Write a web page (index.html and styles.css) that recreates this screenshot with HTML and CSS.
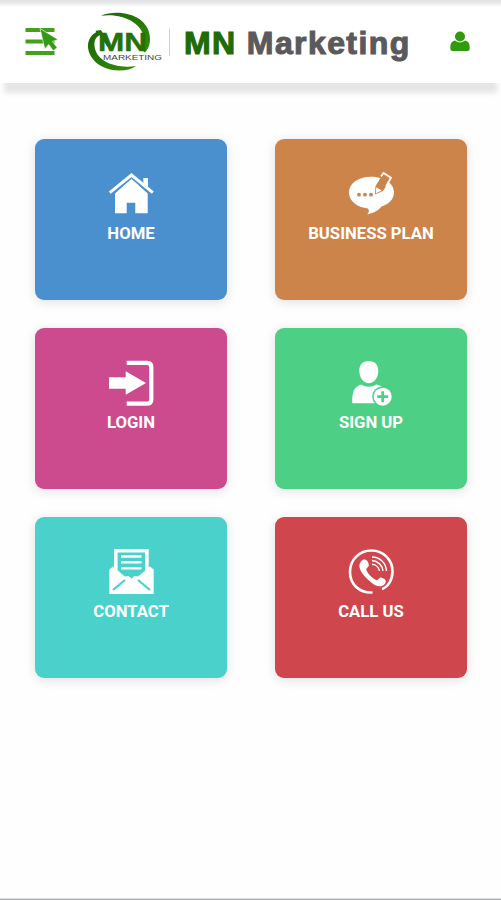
FILE: index.html
```
<!DOCTYPE html>
<html lang="en">
  <head>
    <meta charset="UTF-8" />
    <meta name="viewport" content="width=device-width, initial-scale=1.0" />
    <title>MN Marketing</title>
    <link rel="stylesheet" href="styles.css" />
  </head>
  <body>
    <div class="wrapper">
      <header>
        <a href="#" class="menu" aria-label="Menu">
          <svg width="34" height="30" viewBox="0 0 34 30">
            <path d="M1.500 3h29M1.500 14.500h29M1.500 26h29" stroke="#45a11c" stroke-width="4.200" />
            <path d="M16 1.500L34 12.500l-5.500 2 4.700 6.200-4 3-4.500-6.200-3.900 4.500z" fill="#349a16" stroke="#fff" stroke-width=".6" />
          </svg>
        </a>
        <a href="#" class="logo" aria-label="MN Marketing">
          <svg width="76" height="60" viewBox="0 0 76 60">
            <defs>
              <linearGradient id="swoosh" x1="0" y1="0" x2="1" y2="1">
                <stop offset="0" stop-color="#1d6405" />
                <stop offset="1" stop-color="#318f0b" />
              </linearGradient>
            </defs>
            <path d="M14 3.700C34-4 63 4 63 27C63 33 61 38 57.500 40.500L54 36C65 17 40 0 14 3.700z" fill="url(#swoosh)" />
            <path d="M12 19C-3 24-3 44 14 54C25 60 41 60 49 54C30 57 9 50 7.500 34C7 28 9 25 13 23z" fill="url(#swoosh)" />
            <path d="M9 20.500L13 20L22 34" fill="none" stroke="#246f08" stroke-width="3.600" />
            <text x="11" y="39" class="logo-mn" textLength="49" lengthAdjust="spacingAndGlyphs">MN</text>
            <text x="16" y="48" class="logo-name" textLength="59" lengthAdjust="spacingAndGlyphs">MARKETING</text>
          </svg>
        </a>
        <h1><span>MN</span> Marketing</h1>
        <a href="#" class="user" aria-label="Account">
          <svg width="20" height="21" viewBox="0 0 20 21">
            <path d="M5 9.500C2 10 .3 12 .3 16v1.500q0 2.500 2.500 2.500h14.400q2.500 0 2.500-2.500V16c0-4-1.700-6-4.700-6.500q-5 3.800-10 0z" fill="#319a0d" />
            <circle cx="10" cy="5.500" r="5" fill="#319a0d" />
          </svg>
        </a>
      </header>
      <main>
        <ul class="items">
          <li>
            <a href="#" class="home">
              <svg viewBox="0 0 46 46">
                <path d="M35.300 15V7h4.700v12z" />
                <path d="M7 22.500L23.500 7.500 39.700 22.500V42.300H27.300V31.700H18.700V42.300H7z" />
                <path d="M1.800 21.700L23.500 4 44.800 21.700" class="line" stroke-width="3" />
                <path d="M5 22.700L23.500 7.700 42 22.700" class="cut" stroke-width=".6" />
              </svg>
              HOME
            </a>
          </li>
          <li>
            <a href="#" class="plan">
              <svg viewBox="0 0 46 46">
                <path d="M23 5.700C10 5.700 1 12.500 1 21.500S9 36 20 37.500c1.500 2 1 4-.8 6C26 42 31 39 33.500 35.500 41 33 46 28 46 21.500 46 12 36 5.700 23 5.700z" />
                <circle cx="11" cy="23.700" r="1.900" class="hole" />
                <circle cx="17" cy="23.700" r="1.900" class="hole" />
                <circle cx="23" cy="23.700" r="1.900" class="hole" />
                <path d="M34 4.500L42 9 35 20 27 23.500 27.500 15z" class="hole" />
                <path d="M33 5.500L35.500 2 43 6.700 38 15.500" class="line" stroke-width="1.700" />
                <path d="M28.200 16.200l5.500 3.300-5.700 2.800z" />
              </svg>
              BUSINESS PLAN
            </a>
          </li>
          <li>
            <a href="#" class="login">
              <svg viewBox="0 0 46 46">
                <path d="M18.700 2.800H39q4.300 0 4.300 4.300V39.400q0 4.300-4.300 4.300H18.700" class="line" stroke-width="4.200" />
                <path d="M1 17.200H17.700V11.300L38 23 17.700 34.700V28.800H1z" />
              </svg>
              LOGIN
            </a>
          </li>
          <li>
            <a href="#" class="signup">
              <svg viewBox="0 0 46 46">
                <path d="M20.800 1C27 1 30.500 5 30.300 11.500S26 23.300 20.800 23.300 11.500 18 11.300 11.500 14.500 1 20.800 1z" />
                <path d="M13 24.500q8 4.500 15.500 0C34 26 37 28 37.500 33L29 43.300H4.300C4 34 5 27 13 24.500z" />
                <circle cx="34.700" cy="36.700" r="10.500" class="hole" />
                <circle cx="34.700" cy="36.700" r="9" />
                <path d="M34.700 31.200v11M29.200 36.700h11" class="cut" stroke-width="2.800" />
              </svg>
              SIGN UP
            </a>
          </li>
          <li>
            <a href="#" class="contact">
              <svg viewBox="0 0 46 46">
                <path d="M7.800 22V1.800H38.900V22" class="line" stroke-width="3.600" />
                <path d="M13 7.500H33.500M13 13.300H33.500M13 19.200H33.500" class="line" stroke-width="2.400" />
                <path d="M1.300 20.500L5 17.500 17 27.500 20.500 27 23.500 29.500 26.500 27 30 27.500 42 17.500 45.700 20.500V45H1.300z" />
                <path d="M5 41L17 31M42 41L30 31" class="cut" stroke-width="2.200" />
              </svg>
              CONTACT
            </a>
          </li>
          <li>
            <a href="#" class="call">
              <svg viewBox="0 0 46 46">
                <path d="M24.500 43.500C11 44 2 35 2 23 2 10.500 11.500 1.500 23.500 1.500S44.500 11 44.500 22.300C44.500 31 40 38 34 40" class="line" stroke-width="2.600" />
                <path d="M13 12.500C15.500 9.500 18.500 10 20 13l.8 2.700c.5 2.500-3.300 3-2.300 5.800 2 4 5.500 7.500 9.500 9.500 2.500 1.200 2.500-2.500 5-2.500l3 1.200c2.500 1.200 2.300 4.300 0 6-4 3.200-9 1.300-14.500-3.700S8 18.500 13 12.500z" />
                <path d="M24 8C32 8 38 14 38.500 22M24 11.500C30 12 34.500 16.500 35 22M24 15.200C28 15.500 31 18.500 31.500 22" class="line" stroke-width="1.400" />
              </svg>
              CALL US
            </a>
          </li>
        </ul>
      </main>
      <footer></footer>
    </div>
  </body>
</html>
```

FILE: styles.css
```
* {
  box-sizing: border-box;
}
ul {
  list-style: none;
  margin: 0;
  padding: 0;
}
a {
  text-decoration: none;
  color: #fff;
}
svg {
  display: block;
}
body {
  margin: 0;
  background-color: #fefefe;
}

.wrapper {
  height: 100vh;
  display: flex;
  flex-direction: column;
}
.wrapper > header {
  height: 83px;
  padding-left: 24px;
  display: flex;
  align-items: flex-start;
  background: linear-gradient(#e2e2e4 0, #e9e9e9 3px, #fff 7px);
  box-shadow: 0 14px 5px -4px #e6e6e6;
}
.menu {
  margin-top: 27px;
}
.logo {
  margin: 12px 0 0 29px;
}
.logo-mn {
  font: bold 26.5px "Liberation Sans", sans-serif;
  fill: #257108;
  stroke: #257108;
  stroke-width: 0.5px;
}
.logo-name {
  font: 7.5px "Liberation Sans", sans-serif;
  fill: #444;
}
h1 {
  margin: 29px 0 0 6px;
  padding-left: 14px;
  height: 27px;
  border-left: 1px solid #b9dfae;
  font: bold 32px/28px "Liberation Sans", Arial, sans-serif;
  letter-spacing: 1.4px;
  white-space: nowrap;
  color: #5a5a5c;
  -webkit-text-stroke: 1.1px;
}
h1 span {
  color: #206b05;
}
.user {
  margin: 31px 0 0 auto;
  padding-right: 31px;
}

.wrapper > main {
  flex: 1;
  padding: 56px 34px 0 35px;
}
.items {
  display: grid;
  grid-template-columns: 192px 192px;
  grid-auto-rows: 161px;
  gap: 28px 48px;
}
.items a {
  height: 100%;
  padding-top: 32px;
  display: flex;
  flex-direction: column;
  align-items: center;
  border-radius: 9px;
  background-color: var(--color);
  box-shadow: 0 2px 12px rgba(0, 0, 0, 0.12);
  font: bold 16.7px/34px Roboto, sans-serif;
}
.items svg {
  width: 46px;
  height: 46px;
  fill: #fff;
}
.items .line {
  fill: none;
  stroke: #fff;
}
.items .hole {
  fill: var(--color);
}
.items .cut {
  fill: none;
  stroke: var(--color);
}
.home {
  --color: #4a90cf;
}
.plan {
  --color: #cd844a;
}
.login {
  --color: #cc4a8e;
}
.signup {
  --color: #4dcf85;
}
.contact {
  --color: #4ad1cb;
}
.call {
  --color: #cf474d;
}

footer {
  height: 2px;
  background: linear-gradient(#dde0e0 50%, #aeb0b2 50%);
}
```
